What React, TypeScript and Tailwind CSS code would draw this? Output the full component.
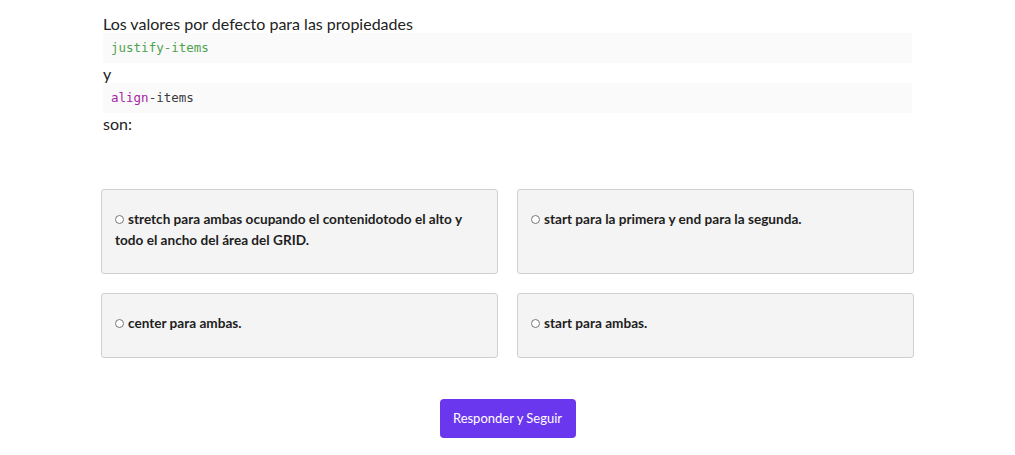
const options = [
  "stretch para ambas ocupando el contenidotodo el alto y todo el ancho del área del GRID.",
  "start para la primera y end para la segunda.",
  "center para ambas.",
  "start para ambas.",
];

export default function App() {
  return (
    <div className="min-h-screen bg-white font-['Lato','Noto_Sans',sans-serif] text-[#222]">
      <div className="mx-auto w-[813px] pt-[13px]">
        <div className="px-[2px] text-[16px] leading-[18px]">
          <div className="pt-[2px]">Los valores por defecto para las propiedades</div>
          <pre className="my-0 h-[30px] bg-[#fafafa] px-[8px] font-['DejaVu_Sans_Mono',monospace] text-[12.5px] leading-[30px] text-[#50a14f]">
            justify-items
          </pre>
          <div className="pt-[2px]">y</div>
          <pre className="my-0 h-[30px] bg-[#fafafa] px-[8px] font-['DejaVu_Sans_Mono',monospace] text-[12.5px] leading-[30px] text-[#383a42]">
            <span className="text-[#a626a4]">align</span>-items
          </pre>
          <div className="pt-[2px]">son:</div>
        </div>

        <div className="mt-[56px] grid grid-cols-2 gap-[19px]">
          {options.map((o) => (
            <div
              key={o}
              className="min-h-[65px] rounded-[3px] border border-[#cfcfcf] bg-[#f4f4f4] px-[13px] pt-[19px] pb-[22px] text-[13.6px] font-bold leading-[21px] text-[#1e1e1e]"
            >
              <span className="mr-[4px] inline-block h-[9px] w-[9px] rounded-full border border-[#777] bg-white align-[0px]"></span>
              {o}
            </div>
          ))}
        </div>

        <div className="mt-[41px] flex justify-center">
          <button className="h-[39px] w-[136px] rounded-[4px] bg-[#6b37ee] text-[13px] text-white">
            Responder y Seguir
          </button>
        </div>
      </div>
    </div>
  );
}
